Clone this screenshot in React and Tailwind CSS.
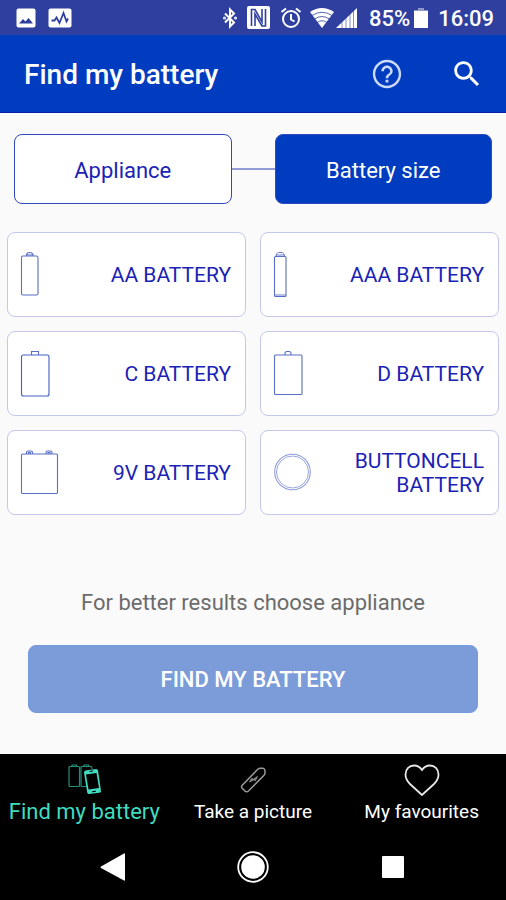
import React, { useState } from "react";

const BATTERIES = [
  { id: "aa", label: "AA BATTERY" },
  { id: "aaa", label: "AAA BATTERY" },
  { id: "c", label: "C BATTERY" },
  { id: "d", label: "D BATTERY" },
  { id: "9v", label: "9V BATTERY" },
  { id: "button", label: "BUTTONCELL BATTERY" },
];

const BatteryIcon = ({ type }) => (
  <svg
    width="40"
    height="48"
    viewBox="0 0 40 48"
    fill="none"
    stroke="#5a6fc8"
    strokeWidth="1.1"
    className="shrink-0"
    aria-hidden="true"
  >
    {type === "aa" && (
      <>
        <rect x="1.500" y="5" width="16.500" height="39" rx="1.500" />
        <path d="M6.500 5V3.500Q7 1.500 9.700 1.500T13 3.500V5M6.500 4h6.500" />
      </>
    )}
    {type === "aaa" && (
      <>
        <rect x="1.500" y="5.500" width="11.500" height="40" rx="1" />
        <path d="M2.500 5.500 4 2.500q.5-1 1.500-1h3.500q1 0 1.500 1l1.500 3M3 4h8.500M1.500 44h11.500" strokeWidth="0.900" />
      </>
    )}
    {type === "c" && (
      <>
        <rect x="1.500" y="5" width="27.500" height="41" rx="2" stroke="#4460c4" />
        <path d="M11.500 5V1.500h7V5" />
      </>
    )}
    {type === "d" && (
      <>
        <rect x="1.500" y="5" width="27.500" height="39.500" rx="1" />
        <path d="M12 5V3.500q0-2 2-2h2q2 0 2 2V5" />
      </>
    )}
    {type === "9v" && (
      <>
        <rect x="1.500" y="5" width="36" height="39.500" rx="1" />
        <path d="M6.500 5V3.500Q6.500 2 8 2h3q1.500 0 1.500 1.500V5M26 5V3.500Q26 2 27.500 2h3q1.500 0 1.500 1.500V5M8.500 5V3.500h2V5M28 5V3.500h2V5" />
      </>
    )}
    {type === "button" && (
      <>
        <circle cx="19.500" cy="23" r="17.800" stroke="#8f9cdb" />
        <circle cx="19.500" cy="23" r="16" stroke="#8f9cdb" strokeWidth="0.900" />
      </>
    )}
  </svg>
);

const StatusBar = () => (
  <div className="flex h-[35px] items-center justify-between bg-[#2f3f9f] px-4 text-white">
    <div className="flex items-center gap-3">
      <svg width="20" height="20" viewBox="0 0 20 20" aria-hidden="true">
        <rect x="0.500" y="0.500" width="19" height="19" rx="2" fill="#fff" />
        <path d="M3 15.500 7 11l2.500 2.500L12.500 10l4.500 5.500z" fill="#2f3f9f" />
      </svg>
      <svg width="24" height="20" viewBox="0 0 24 20" aria-hidden="true">
        <rect x="0.500" y="0.500" width="23" height="19" rx="2" fill="#fff" />
        <path
          d="M3.500 12.500h3l2-3 3 5.500L15.500 5l3 8.500 1.500-3"
          fill="none"
          stroke="#2f3f9f"
          strokeWidth="1.800"
        />
      </svg>
    </div>
    <div className="-mr-1 flex items-center">
      <svg width="14" height="22" viewBox="0 0 14 22" fill="none" stroke="#fff" strokeWidth="2" aria-hidden="true">
        <path d="M2 6.500l9 9L7 19.500v-17l4 4-9 9" />
        <circle cx="1.500" cy="11" r="0.500" fill="#fff" />
        <circle cx="12.500" cy="11" r="0.500" fill="#fff" />
      </svg>
      <svg width="23" height="23" viewBox="0 0 23 23" className="ml-2.5" aria-hidden="true">
        <rect width="23" height="23" rx="2" fill="#fff" />
        <path d="M4.500 20V3.500H8L15 16V3" fill="none" stroke="#2f3f9f" strokeWidth="1.600" />
        <path d="M8 20V8l7 12h3.500V3" fill="none" stroke="#2f3f9f" strokeWidth="1.600" />
      </svg>
      <svg width="22" height="22" viewBox="0 0 22 22" fill="none" stroke="#fff" strokeWidth="2" className="ml-2.5" aria-hidden="true">
        <circle cx="11" cy="12" r="8" />
        <path d="M11 7v5.500l3.500 2M1.500 5 6 1.500M20.500 5 16 1.500" />
      </svg>
      <svg width="24" height="20" viewBox="0 0 24 20" className="ml-2" aria-hidden="true">
        <path d="M0 4Q12-4 24 4L12 20z" fill="#fff" />
        <path d="M2 7.500q10-6.500 20 0M4.500 11q7.500-5 15 0M7 14.500q5-3.500 10 0" fill="none" stroke="#2f3f9f" strokeWidth="0.800" />
      </svg>
      <svg width="21" height="20" viewBox="0 0 21 20" className="ml-0.5" aria-hidden="true">
        <path d="M0 20 21 0v20z" fill="#fff" />
        <path d="M6 13v7M10 9v11M14 5v15M17.500 2v18" stroke="#2f3f9f" strokeWidth="0.600" />
      </svg>
      <span className="ml-3 pt-0.5 text-[22px] font-medium leading-7">85%</span>
      <svg width="14" height="20" viewBox="0 0 14 20" className="ml-1" aria-hidden="true">
        <path d="M4 0h6v2h4v18H0V2h4z" fill="#fff" />
        <path d="M0 2h4V0h6v2h4v1H0z" fill="#8f98cb" />
      </svg>
      <span className="ml-2.5 pt-0.5 text-[22px] font-medium leading-7">16:09</span>
    </div>
  </div>
);

const FindIcon = () => (
  <svg width="34" height="32" viewBox="0 0 34 32" fill="none" aria-hidden="true">
    <g stroke="#238e79" strokeWidth="1.200">
      <rect x="2" y="2.500" width="10.500" height="20" rx="1" />
      <path d="M5 2.500V1h4.500v1.500M19 22.500h-4q-1 0-1-1v-18q0-1 1-1h8.500q1.500 0 1.500 2.500M17 2.500V1h4.500v1.500" />
    </g>
    <path d="M18.500 6.500 29 5q1.500 0 2 1.500l3 20.500q0 1.500-1.500 1.800L22 30q-1.500 0-1.800-1.500L17 8.500q0-1.500 1.500-2z" fill="#3fdcc0" />
    <path d="m19 10.500 10.500-1.500L32 24l-10.500 1.500z" fill="#000" />
    <path d="m25 27.800 4-.6M22.500 7.500l3.500-.5" stroke="#000" />
  </svg>
);

const CameraBatteryIcon = () => (
  <svg width="28" height="28" viewBox="0 0 28 28" fill="none" stroke="#9a9a9a" strokeWidth="1.500" aria-hidden="true">
    <path d="M3 19.500 18.500 3.500q1.500-1.200 3-1.200h2.500q2 .5 2 2.500v2q0 1.500-1.200 2.700L9.500 25q-2 1.500-3.500 0l-3-3q-1-1.200 0-2.500z" />
    <path d="m10.500 16 2-3.500 2 .5 4-2.500-2 4-2-.5z" fill="#777" strokeWidth="0.800" />
  </svg>
);

const HeartIcon = () => (
  <svg width="36" height="32" viewBox="0 0 36 32" fill="none" stroke="#e8e8e8" strokeWidth="1.800" aria-hidden="true">
    <path d="M18 31 6 20C3 17 1.500 14 1.500 10.500 1.500 5 5.500 1.500 10 1.500c3.500 0 6 1.500 8 4.500 2-3 4.500-4.500 8-4.500 4.500 0 8.500 3.500 8.500 9 0 3.500-1.500 6.500-4.500 9.500z" />
  </svg>
);

const TABS = [
  { id: "find", label: "Find my battery", icon: <FindIcon /> },
  { id: "picture", label: "Take a picture", icon: <CameraBatteryIcon /> },
  { id: "favourites", label: "My favourites", icon: <HeartIcon /> },
];

const App = () => {
  const [mode, setMode] = useState("size");
  const [selected, setSelected] = useState(null);
  const [tab, setTab] = useState("find");

  const modeClass = (active) =>
    active ? "bg-[#003cc0] text-white" : "bg-white text-[#1a23b5]";

  return (
    <div className="flex min-h-screen flex-col bg-[#fafafa] font-[Roboto,sans-serif]">
      <StatusBar />

      <header className="flex h-[78px] items-center border-b border-[#0a1fa8] bg-[#003cc0] px-6 text-white">
        <h1 className="flex-1 pt-0.5 text-[28px] font-medium leading-8">Find my battery</h1>
        <button aria-label="Help" className="mr-[46px]">
          <svg width="34" height="34" viewBox="0 0 24 24" fill="#ccdafa" aria-hidden="true">
            <path d="M11 18h2v-2h-2v2zm1-16C6.480 2 2 6.480 2 12s4.480 10 10 10 10-4.480 10-10S17.520 2 12 2zm0 18.300c-4.570 0-8.300-3.730-8.300-8.300S7.430 3.700 12 3.700s8.300 3.730 8.300 8.300-3.730 8.300-8.300 8.300zM12 6c-2.210 0-4 1.790-4 4h1.800c0-1.200 1-2.200 2.200-2.200s2.200 1 2.200 2.200c0 2-3.100 1.750-3.100 5h1.800c0-2.250 3.100-2.500 3.100-5 0-2.210-1.790-4-4-4z" />
          </svg>
        </button>
        <button aria-label="Search" className="-mr-0.5">
          <svg width="34" height="34" viewBox="0 0 24 24" fill="#fff" aria-hidden="true">
            <path d="M15.500 14h-.79l-.28-.27C15.410 12.590 16 11.110 16 9.500 16 5.910 13.090 3 9.500 3S3 5.910 3 9.500 5.910 16 9.500 16c1.610 0 3.090-.59 4.230-1.570l.27.28v.79l5 4.990L20.490 19l-4.990-5zm-6 0C7.010 14 5 11.990 5 9.500S7.010 5 9.500 5 14 7.010 14 9.500 11.990 14 9.500 14z" />
          </svg>
        </button>
      </header>

      <main className="flex flex-1 flex-col">
        <div className="mt-[21px] flex items-center px-3.5">
          <button
            onClick={() => setMode("appliance")}
            className={`h-[70px] flex-1 rounded-lg border border-[#2f48bd] pt-0.5 text-[22px] ${modeClass(mode === "appliance")}`}
          >
            Appliance
          </button>
          <div className="h-0.5 w-[43px] bg-[#929bd8]" />
          <button
            onClick={() => setMode("size")}
            className={`h-[70px] flex-1 rounded-lg border border-[#2f48bd] pt-0.5 text-[22px] ${modeClass(mode === "size")}`}
          >
            Battery size
          </button>
        </div>

        <div className="mt-7 grid grid-cols-2 gap-x-3.5 gap-y-3.5 px-[7px]">
          {BATTERIES.map((battery) => (
            <button
              key={battery.id}
              onClick={() => setSelected(battery.id)}
              aria-pressed={selected === battery.id}
              className="flex h-[85px] items-center justify-between rounded-lg border border-[#c3c7ea] bg-white px-3 text-right text-[21px] leading-6 text-[#1a23b5]"
            >
              <BatteryIcon type={battery.id} />
              <span className="max-w-36 pr-0.5">{battery.label}</span>
            </button>
          ))}
        </div>

        <p className="mt-[74px] text-center text-[22px] leading-7 text-[#6b6b6b]">
          For better results choose appliance
        </p>
        <button className="mx-7 mt-7 h-[68px] rounded-lg border border-[#739bdf] bg-[#7c9bd9] text-[22px] font-medium text-white">
          FIND MY BATTERY
        </button>
      </main>

      <footer className="bg-black">
        <nav className="grid grid-cols-3 pt-2 pb-2">
          {TABS.map((item) => (
            <button
              key={item.id}
              onClick={() => setTab(item.id)}
              className={`flex flex-col items-center whitespace-nowrap ${
                tab === item.id ? "text-[22px] text-[#3fdcc0]" : "text-[19px] text-white"
              }`}
            >
              <span className="flex h-9 items-center">{item.icon}</span>
              <span className="leading-7">{item.label}</span>
            </button>
          ))}
        </nav>
        <div className="flex h-[66px] items-center justify-center gap-27">
          <button aria-label="Back" className="flex w-8 justify-center">
            <svg width="28" height="28" viewBox="0 0 28 28" fill="#fff" aria-hidden="true">
              <path d="M26 1v26q0 1-1 .5L2 15q-1-1 0-1.500L25 .5q1-.5 1 .5z" />
            </svg>
          </button>
          <button aria-label="Home" className="flex w-8 justify-center">
            <svg width="32" height="32" viewBox="0 0 32 32" aria-hidden="true">
              <circle cx="16" cy="16" r="14.800" fill="none" stroke="#fff" strokeWidth="1.800" />
              <circle cx="16" cy="16" r="11.800" fill="#fff" />
            </svg>
          </button>
          <button aria-label="Recent apps" className="flex w-8 justify-center">
            <svg width="24" height="24" viewBox="0 0 24 24" aria-hidden="true">
              <rect x="1" y="1" width="22" height="22" rx="1" fill="#fff" />
            </svg>
          </button>
        </div>
      </footer>
    </div>
  );
};

export default App;
